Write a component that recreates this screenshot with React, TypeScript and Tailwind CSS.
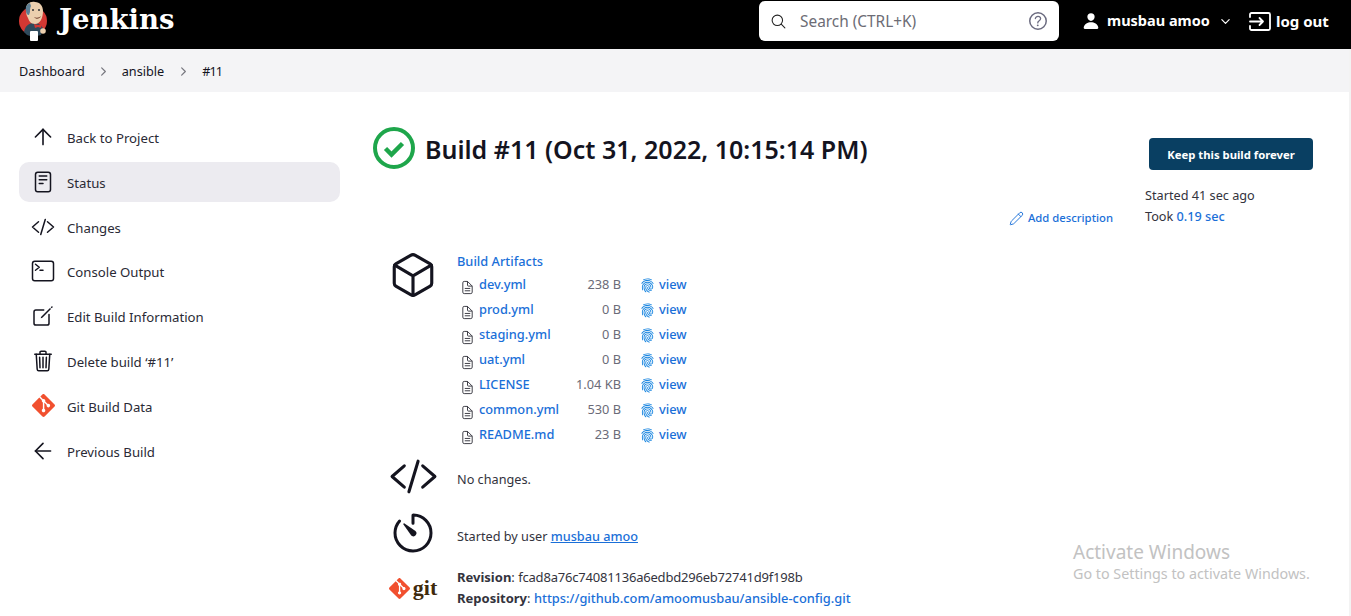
import {
  IoChevronDown,
  IoChevronForward,
  IoCodeSlashOutline,
  IoCreateOutline,
  IoCubeOutline,
  IoDocumentTextOutline,
  IoFingerPrint,
  IoHelpCircleOutline,
  IoPerson,
  IoReaderOutline,
  IoSearchOutline,
  IoTerminalOutline,
  IoTimerOutline,
  IoTrashOutline,
} from 'react-icons/io5'
import { ArrowLeft, ArrowUp, Pencil } from 'lucide-react'
import { SiGit } from 'react-icons/si'
import type { ReactNode } from 'react'

const font = "font-['Noto_Sans','Open_Sans',sans-serif]"

const sideItems: { label: string; icon: ReactNode; active?: boolean }[] = [
  { label: 'Back to Project', icon: <ArrowUp size={26} strokeWidth={1.5} /> },
  { label: 'Status', icon: <IoReaderOutline size={24} />, active: true },
  { label: 'Changes', icon: <IoCodeSlashOutline size={24} /> },
  { label: 'Console Output', icon: <IoTerminalOutline size={24} /> },
  { label: 'Edit Build Information', icon: <IoCreateOutline size={24} /> },
  { label: 'Delete build ‘#11’', icon: <IoTrashOutline size={24} /> },
  { label: 'Git Build Data', icon: <SiGit size={23} className="text-[#f1502f]" /> },
  { label: 'Previous Build', icon: <ArrowLeft size={26} strokeWidth={1.5} /> },
]

const artifacts = [
  { name: 'dev.yml', size: '238 B' },
  { name: 'prod.yml', size: '0 B' },
  { name: 'staging.yml', size: '0 B' },
  { name: 'uat.yml', size: '0 B' },
  { name: 'LICENSE', size: '1.04 KB' },
  { name: 'common.yml', size: '530 B' },
  { name: 'README.md', size: '23 B' },
]

function JenkinsLogo() {
  return (
    <svg width="30" height="42" viewBox="0 0 30 42" aria-hidden="true">
      <circle cx="14" cy="21" r="14" fill="#d33833" />
      <path d="M5 32c1-6 5-9 10-9s8 2 9 6l-2 6-8 2-6-2z" fill="#2f4a5c" />
      <path d="M7 9c0-5 4-8 9-7 5 0 8 4 8 9 0 7-3 13-8 13-4 0-6-3-7-6-2-3-2-6-2-9z" fill="#eccfae" />
      <path d="M7 11c-1-4 1-7 4-8l1 3c-1 2-1 4-1 6l-1 3c-2 0-3-2-3-4z" fill="#5d7f94" />
      <path d="M15 24l4 1 4-1-1 4-3-1-3 1z" fill="#d33833" />
      <path d="M15 17c2 1 5 1 7-1-1 3-5 4-7 1z" fill="#7a4a36" />
      <circle cx="14" cy="10" r="1" fill="#333" />
      <circle cx="20" cy="10" r="1" fill="#333" />
      <rect x="11" y="31" width="8" height="10" rx="1" fill="#fff" />
      <circle cx="24" cy="31" r="2.800" fill="#eccfae" />
    </svg>
  )
}

function LogoutIcon() {
  return (
    <svg width="22" height="19" viewBox="0 0 22 19" fill="none" stroke="#fff" strokeWidth="1.8" strokeLinecap="round" strokeLinejoin="round" aria-hidden="true">
      <path d="M1 5V2.500A1.500 1.500 0 0 1 2.500 1h17A1.500 1.500 0 0 1 21 2.500v14a1.500 1.500 0 0 1-1.500 1.500h-17A1.500 1.500 0 0 1 1 16.500V14" />
      <path d="M1 9.500h13M10.500 6l3.500 3.500-3.500 3.500" />
    </svg>
  )
}

function CheckIcon() {
  return (
    <svg width="42" height="42" viewBox="0 0 42 42" fill="none" aria-hidden="true">
      <circle cx="21" cy="21" r="19" stroke="#1ea64b" strokeWidth="4" />
      <path d="M12.500 21.500l6 6 11-11" stroke="#1ea64b" strokeWidth="4.500" />
    </svg>
  )
}

function Header() {
  return (
    <header className="h-[49px] bg-black flex items-center shrink-0">
      <div className="ml-[19px] h-[49px] overflow-hidden flex items-start">
        <JenkinsLogo />
      </div>
      <span className="ml-[10px] font-['DejaVu_Serif',serif] font-bold text-[27.500px] text-white leading-none -mt-[9px]">
        Jenkins
      </span>
      <div className="ml-auto w-[300px] h-[40px] bg-white rounded-[6px] flex items-center pl-[11px] pr-[9px] -mt-[7px]">
        <IoSearchOutline size={17} className="text-[#222]" />
        <span className="ml-[13px] pt-[2px] text-[15.400px] text-[#6c6c75]">Search (CTRL+K)</span>
        <IoHelpCircleOutline size={24} className="ml-auto text-[#6c6c80]" />
      </div>
      <div className="ml-[23px] flex items-center text-white font-bold -mt-[7px]">
        <IoPerson size={18} />
        <span className="ml-[7px] w-[103px] text-[14.500px] whitespace-nowrap">musbau amoo</span>
        <IoChevronDown size={13} className="ml-[9px]" />
        <span className="ml-[17px]"><LogoutIcon /></span>
        <span className="ml-[5px] mr-[21px] w-[54px] text-[15px] whitespace-nowrap">log out</span>
      </div>
    </header>
  )
}

function Breadcrumbs() {
  return (
    <nav className="h-[43px] bg-[#f4f4f6] flex items-center pl-[19px] pt-[2px] text-[12.700px] text-[#14141f] shrink-0">
      <span>Dashboard</span>
      <IoChevronForward size={13} className="mx-[12px] text-[#77777f]" />
      <span>ansible</span>
      <IoChevronForward size={13} className="mx-[12.500px] text-[#77777f]" />
      <span className="tracking-[-1px]">#11</span>
    </nav>
  )
}

function Sidebar() {
  return (
    <aside className="w-[321px] ml-[19px] pt-[25px] flex flex-col shrink-0">
      {sideItems.map(item => (
        <div
          key={item.label}
          className={`h-[40px] mb-[4.800px] flex items-center rounded-[10px] text-[13.200px] text-[#2a2a35] ${item.active ? 'bg-[#ecebf0]' : ''}`}
        >
          <span className="w-[48px] flex justify-center text-[#14141f]">{item.icon}</span>
          <span className="pt-[4px]">{item.label}</span>
        </div>
      ))}
    </aside>
  )
}

function MainPanel() {
  return (
    <main className="ml-[33px] flex-1 mr-[38px] pt-[35px] min-w-0">
      <div className="flex items-start justify-between">
        <div className="flex items-center">
          <CheckIcon />
          <h1 className="ml-[10px] text-[25px] font-semibold text-[#14141f] leading-none mt-[2px] whitespace-nowrap">
            Build #11 (Oct 31, 2022, 10:15:14 PM)
          </h1>
        </div>
        <button className="mt-[11px] w-[164px] h-[32px] pt-[2px] rounded-[4px] bg-[#093f62] text-white text-[11.300px] font-bold">
          Keep this build forever
        </button>
      </div>

      <div className="flex justify-end mt-[15px]">
        <div className="flex items-center self-end text-[#1a6fd8] text-[11.300px] font-medium mr-[32px]">
          <Pencil size={15} strokeWidth={1.5} />
          <span className="ml-[4px]">Add description</span>
        </div>
        <div className="w-[168px] text-[12.700px] text-[#33333d] leading-[21px]">
          <p>Started 41 sec ago</p>
          <p>
            Took <span className="text-[#1a6fd8] font-medium">0.19 sec</span>
          </p>
        </div>
      </div>

      <section className="flex mt-[23px]">
        <div className="w-[84px] pr-[4px] flex justify-center text-[#14141f]">
          <IoCubeOutline size={50} />
        </div>
        <div className="text-[12.800px] font-medium">
          <div className="text-[#1a6fd8] h-[22px] leading-[23px]">Build Artifacts</div>
          {artifacts.map(a => (
            <div key={a.name} className="h-[25px] flex items-center">
              <IoDocumentTextOutline size={15} className="ml-[3px] text-[#33333d] mt-[5px]" />
              <span className="ml-[4px] w-[82px] text-[#1a6fd8] whitespace-nowrap">{a.name}</span>
              <span className="w-[60px] text-right font-normal text-[#6b6b78] whitespace-nowrap">{a.size}</span>
              <IoFingerPrint size={15} className="ml-[19px] text-[#1a86e0] mt-[2px]" />
              <span className="ml-[4px] text-[#1a6fd8]">view</span>
            </div>
          ))}
        </div>
      </section>

      <section className="flex items-center mt-[5px]">
        <div className="w-[84px] pr-[4px] flex justify-center text-[#14141f]">
          <IoCodeSlashOutline size={49} />
        </div>
        <p className="text-[12.700px] text-[#33333d] mt-[6px]">No changes.</p>
      </section>

      <section className="flex items-center mt-[8px]">
        <div className="w-[84px] pr-[4px] flex justify-center text-[#14141f]">
          <IoTimerOutline size={48} />
        </div>
        <p className="text-[12.700px] text-[#33333d] mt-[8px]">
          Started by user <span className="text-[#1a6fd8] font-medium underline">musbau amoo</span>
        </p>
      </section>

      <section className="flex items-center mt-[10px]">
        <div className="w-[84px] pr-[4px] flex items-center justify-center">
          <SiGit size={21} className="text-[#f1502f]" />
          <span className="ml-[3px] font-['Liberation_Serif',serif] font-bold text-[22px] leading-none text-[#3f2a0c]">git</span>
        </div>
        <div className="text-[13px] text-[#33333d] leading-[21px]">
          <p>
            <b className="font-bold">Revision</b>: <span className="tracking-[-0.200px]">fcad8a76c74081136a6edbd296eb72741d9f198b</span>
          </p>
          <p>
            <b className="font-bold">Repository</b>: <span className="text-[#1a6fd8] font-medium text-[12.850px]">https://github.com/amoomusbau/ansible-config.git</span>
          </p>
        </div>
      </section>
    </main>
  )
}

export default function App() {
  return (
    <div className={`relative h-screen overflow-hidden bg-white flex flex-col ${font}`}>
      <Header />
      <Breadcrumbs />
      <div className="flex flex-1 min-h-0">
        <Sidebar />
        <MainPanel />
      </div>
      {/* scrollbar strip and windows activation watermark sit over the page */}
      <div className="absolute right-0 top-[49px] bottom-0 w-[2px] bg-[#f3f3f3]" />
      <div className="absolute left-[1073px] top-[540px] text-[#c2c2c2] pointer-events-none whitespace-nowrap">
        <div className="text-[19px] leading-[24px]">Activate Windows</div>
        <div className="text-[14.300px] leading-[20px]">Go to Settings to activate Windows.</div>
      </div>
    </div>
  )
}
